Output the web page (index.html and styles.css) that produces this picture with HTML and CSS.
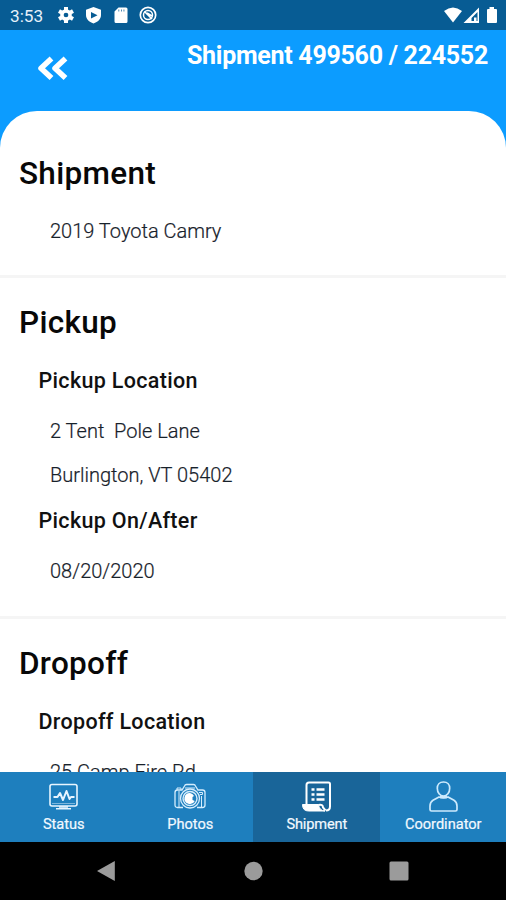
FILE: index.html
```html
<!DOCTYPE html>
<html lang="en">
<head>
<meta charset="utf-8">
<title>Shipment</title>
<link rel="stylesheet" href="styles.css">
</head>
<body>
<div class="status-bar">
  <span class="clock">3:53</span>
  <svg class="status-left" width="108" height="20" viewBox="0 0 108 20" fill="#fff">
    <g transform="translate(10 10)">
      <circle r="4.1" fill="none" stroke="#fff" stroke-width="3.5"/>
      <path d="M0-5V-8M0 5V8M4.5-2.6L7-4M4.5 2.6L7 4M-4.5-2.6L-7-4M-4.5 2.6L-7 4" stroke="#fff" stroke-width="4"/>
    </g>
    <path fill-rule="evenodd" d="M37.500 2L45 4.800V10C45 14 42 17 37.500 18.500C33 17 30 14 30 10V4.800ZM35 7V13.500L41.500 10.200Z"/>
    <path fill-rule="evenodd" d="M62.500 2.500H70Q71.500 2.500 71.500 4V16.500Q71.500 18 70 18H60Q58.500 18 58.500 16.500V6.500ZM62.500 4.500V6.500H63.200V4.500ZM65 4.500V6.500H65.700V4.500ZM67.600 4.500V6.500H68.300V4.500Z"/>
    <g fill="none" stroke="#fff" transform="translate(92 10)">
      <circle r="7.700" stroke-width="1.700"/>
      <circle r="4.500" stroke-width="1.500"/>
      <path d="M-3.500-3.500L4 4M-1-2L4 1" stroke-width="1.700"/>
    </g>
  </svg>
  <svg class="status-right" width="56" height="20" viewBox="0 0 56 20" fill="#fff">
    <path d="M1 6Q10 -1 19 6L10 17.500Z"/>
    <path fill-rule="evenodd" d="M36 2.500V18H20.500ZM34.500 7L28.500 13V16H34.500ZM31 12.500H33.500V16H31Z"/>
    <path d="M46.500 4V2H51V4H53Q54 4 54 5V17Q54 18 53 18H45Q44 18 44 17V5Q44 4 45 4Z"/>
  </svg>
</div>
<header class="header">
  <svg class="back" width="32" height="26" viewBox="0 0 32 26" fill="none" stroke="#fff" stroke-width="5.500" stroke-linejoin="round">
    <path d="M14.500 3.500L4 13.300L14.500 23.100M28.500 3.500L18 13.300L28.500 23.100"/>
  </svg>
  <h1 class="title">Shipment 499560 / 224552</h1>
</header>
<main class="content">
  <section class="section">
    <h2>Shipment</h2>
    <p>2019 Toyota Camry</p>
  </section>
  <section class="section">
    <h2>Pickup</h2>
    <h3>Pickup Location</h3>
    <p>2 Tent&nbsp; Pole Lane</p>
    <p class="next">Burlington, VT 05402</p>
    <h3 class="next">Pickup On/After</h3>
    <p>08/20/2020</p>
  </section>
  <section class="section">
    <h2>Dropoff</h2>
    <h3>Dropoff Location</h3>
    <p>25 Camp Fire Rd</p>
  </section>
</main>
<nav class="tabs">
  <div class="tab">
    <svg width="32" height="34" viewBox="0 0 32 34" fill="none" stroke="#e8f5ff" stroke-width="1.600">
      <rect x="3" y="5.500" width="27" height="21.500" rx="2"/>
      <path d="M5 24.500H28" stroke-width=".8" opacity=".6"/>
      <path d="M6.500 18H10.500L13 14L16 21L19.500 12L22.500 20L24 18H27.500" stroke-width="2" stroke-linejoin="round"/>
      <path d="M12 28H21M9 29.800H24"/>
    </svg>
    <span>Status</span>
  </div>
  <div class="tab">
    <svg width="32" height="34" viewBox="0 0 32 34" fill="none" stroke="#d5edfd" stroke-width="1.300">
      <path d="M9 28.500H3.500Q1 28.500 1 26V13.500Q1 11 3.500 11H8L10.500 7Q11 5.500 12.500 5.500H19.500Q21 5.500 21.500 7L24 11H28.500Q31 11 31 13.500V26Q31 28.500 28.500 28.500H23"/>
      <path d="M3 11V9H7V11M5 12V28M27.500 17V28M25 13.500H28.500V15.500H26M11 9H21" stroke-width="1"/>
      <circle cx="16" cy="19.500" r="9.500"/>
      <circle cx="16" cy="19.500" r="7" stroke-width="1.400"/>
      <path fill="#fff" stroke="none" d="M16 14A5.500 5.500 0 1 0 20.800 22L18.500 21V18L20 17A5.500 5.500 0 0 0 16 14Z"/>
    </svg>
    <span>Photos</span>
  </div>
  <div class="tab active">
    <svg width="32" height="34" viewBox="0 0 32 34" fill="none" stroke="#fff" stroke-width="2">
      <path d="M6.500 26V6Q6.500 3.500 9 3.500H28.500Q30 3.500 30 5V27.500Q30 31.500 26 31.500"/>
      <path d="M2.500 25.500H18.500Q19 31.500 25 32H8.500Q2.500 32 2.500 25.500Z" fill="#fff" stroke-width="1"/>
      <path d="M18.500 26Q23 25 23 28.500L25.500 31.500" stroke-width="2"/>
      <path d="M11.500 10.500H14.500M11.500 15.500H14.500M11.500 20.500H14.500M16.500 10.500H24.500M16.500 15.500H24.500M16.500 20.500H24.500" stroke-width="2.500"/>
    </svg>
    <span>Shipment</span>
  </div>
  <div class="tab">
    <svg width="32" height="34" viewBox="0 0 32 34" fill="none" stroke="#cdeafd" stroke-width="1.700">
      <path d="M16.500 3C12.500 3 10.300 5.500 10.300 9.300C10.300 13.700 13 17 16.500 17S22.700 13.700 22.700 9.300C22.700 5.500 20.500 3 16.500 3Z"/>
      <path d="M12 18L6 21.200Q3 23 3 27V30.500Q3 32 4.500 32H28.500Q30 32 30 30.500V27Q30 23 27 21.200L21 18Q16.500 20 12 18Z"/>
      <path d="M13 18H20" stroke-width="2.500"/>
    </svg>
    <span>Coordinator</span>
  </div>
</nav>
<footer class="system-nav">
  <svg width="20" height="22" viewBox="0 0 20 22"><path d="M1 11L18.800 1V21Z" fill="#9b9b9b"/></svg>
  <svg width="20" height="22" viewBox="0 0 20 22"><circle cx="10.500" cy="11" r="9.200" fill="#9b9b9b"/></svg>
  <svg width="20" height="22" viewBox="0 0 20 22"><rect x=".5" y="1.500" width="19" height="19" rx="1.500" fill="#9b9b9b"/></svg>
</footer>
</body>
</html>
```

FILE: styles.css
```css
* { box-sizing: border-box; }
body {
  margin: 0;
  width: 506px;
  height: 900px;
  overflow: hidden;
  display: flex;
  flex-direction: column;
  background: #0c9cff;
  font-family: Roboto, sans-serif;
}
svg { display: block; flex: none; }
h1, h2, h3, p { margin: 0; white-space: nowrap; }
.status-bar {
  flex: none;
  height: 30px;
  background: #075c94;
  display: flex;
  align-items: center;
  padding: 0 7px 0 10px;
}
.clock {
  width: 46px;
  color: #e6f1fa;
  font-size: 17.2px;
  line-height: 20px;
  padding-top: 1px;
}
.status-right { margin-left: auto; }
.header {
  flex: none;
  height: 81px;
  display: flex;
  justify-content: space-between;
  padding: 9px 18px 0 37px;
}
.back { margin-top: 16px; }
.title {
  color: #fff;
  font-size: 25px;
  font-weight: 700;
  line-height: 32px;
  letter-spacing: -0.28px;
  padding-top: 1px;
}
.content {
  flex: 1;
  min-height: 0;
  overflow: hidden;
  background: #fff;
  border-radius: 37px 37px 0 0;
}
.section { border-bottom: 3px solid #f5f5f5; padding: 25px 0 33px; }
.section:first-child { padding: 43px 0 32px; }
.section:first-child p { margin-top: 25px; }
h2 {
  margin-left: 19px;
  font-size: 31.5px;
  font-weight: 500;
  line-height: 40px;
  letter-spacing: 0.3px;
  color: #080808;
}
h3 {
  margin: 25px 0 0 38.5px;
  font-size: 21.5px;
  font-weight: 500;
  line-height: 26px;
  letter-spacing: 0.32px;
  color: #111;
}
p {
  margin: 25px 0 0 50px;
  font-size: 20px;
  font-weight: 300;
  line-height: 24px;
  color: #17212a;
  -webkit-text-stroke: 0.2px #17212a;
}
p.next { margin-top: 20px; }
h3.next { margin-top: 21px; }
.tabs {
  flex: none;
  height: 70px;
  display: grid;
  grid-template-columns: repeat(4, 1fr);
  background: #1e7fbe;
}
.tab {
  display: flex;
  flex-direction: column;
  align-items: center;
  padding-top: 7px;
  color: #f2f9ff;
  font-size: 14.6px;
  font-weight: 400;
  line-height: 18px;
}
.tab span { margin: 2px 0 0 1px; -webkit-text-stroke: 0.2px #f2f9ff; }
.active { background: #196599; }
.active span { letter-spacing: -0.15px; }
.system-nav {
  flex: none;
  height: 58px;
  background: #000;
  display: flex;
  justify-content: space-between;
  align-items: center;
  padding: 0 97px 0 96px;
}
```
